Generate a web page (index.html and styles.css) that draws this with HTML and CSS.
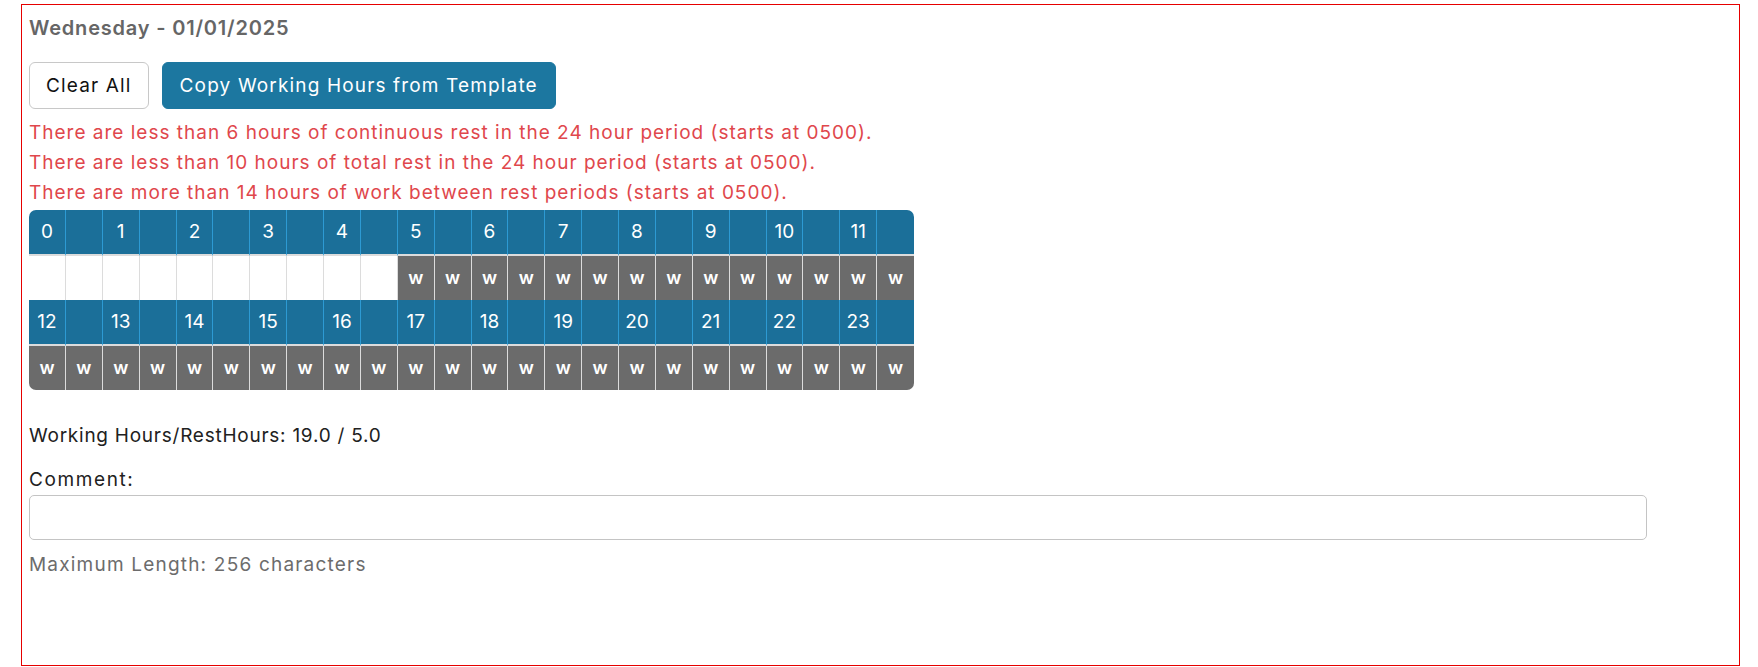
FILE: index.html
```html
<!DOCTYPE html>
<html lang="en">
<head>
  <meta charset="UTF-8">
  <meta name="viewport" content="width=device-width, initial-scale=1.0">
  <title>Work / Rest Hours</title>
  <link rel="stylesheet" href="styles.css">
</head>
<body>
  <div class="day-panel">
    <h3 class="day-title">Wednesday - 01/01/2025</h3>

    <div class="actions">
      <button class="btn btn-light">Clear All</button>
      <button class="btn btn-primary">Copy Working Hours from Template</button>
    </div>

    <div class="warnings">
      <div>There are less than 6 hours of continuous rest in the 24 hour period (starts at 0500).</div>
      <div>There are less than 10 hours of total rest in the 24 hour period (starts at 0500).</div>
      <div>There are more than 14 hours of work between rest periods (starts at 0500).</div>
    </div>

    <div class="hours">
      <!-- 00:00 - 11:30 -->
      <div class="hour">0</div><div class="hour"></div><div class="hour">1</div><div class="hour"></div>
      <div class="hour">2</div><div class="hour"></div><div class="hour">3</div><div class="hour"></div>
      <div class="hour">4</div><div class="hour"></div><div class="hour">5</div><div class="hour"></div>
      <div class="hour">6</div><div class="hour"></div><div class="hour">7</div><div class="hour"></div>
      <div class="hour">8</div><div class="hour"></div><div class="hour">9</div><div class="hour"></div>
      <div class="hour">10</div><div class="hour"></div><div class="hour">11</div><div class="hour"></div>

      <div class="slot"></div><div class="slot"></div><div class="slot"></div><div class="slot"></div>
      <div class="slot"></div><div class="slot"></div><div class="slot"></div><div class="slot"></div>
      <div class="slot"></div><div class="slot"></div><div class="slot work">w</div><div class="slot work">w</div>
      <div class="slot work">w</div><div class="slot work">w</div><div class="slot work">w</div><div class="slot work">w</div>
      <div class="slot work">w</div><div class="slot work">w</div><div class="slot work">w</div><div class="slot work">w</div>
      <div class="slot work">w</div><div class="slot work">w</div><div class="slot work">w</div><div class="slot work">w</div>

      <!-- 12:00 - 23:30 -->
      <div class="hour">12</div><div class="hour"></div><div class="hour">13</div><div class="hour"></div>
      <div class="hour">14</div><div class="hour"></div><div class="hour">15</div><div class="hour"></div>
      <div class="hour">16</div><div class="hour"></div><div class="hour">17</div><div class="hour"></div>
      <div class="hour">18</div><div class="hour"></div><div class="hour">19</div><div class="hour"></div>
      <div class="hour">20</div><div class="hour"></div><div class="hour">21</div><div class="hour"></div>
      <div class="hour">22</div><div class="hour"></div><div class="hour">23</div><div class="hour"></div>

      <div class="slot work">w</div><div class="slot work">w</div><div class="slot work">w</div><div class="slot work">w</div>
      <div class="slot work">w</div><div class="slot work">w</div><div class="slot work">w</div><div class="slot work">w</div>
      <div class="slot work">w</div><div class="slot work">w</div><div class="slot work">w</div><div class="slot work">w</div>
      <div class="slot work">w</div><div class="slot work">w</div><div class="slot work">w</div><div class="slot work">w</div>
      <div class="slot work">w</div><div class="slot work">w</div><div class="slot work">w</div><div class="slot work">w</div>
      <div class="slot work">w</div><div class="slot work">w</div><div class="slot work">w</div><div class="slot work">w</div>
    </div>

    <p class="totals">Working Hours/RestHours: 19.0 / 5.0</p>

    <label class="comment-label" for="comment">Comment:</label>
    <input class="comment-input" id="comment" type="text" maxlength="256">
    <div class="hint">Maximum Length: 256 characters</div>
  </div>
</body>
</html>
```

FILE: styles.css
```css
body {
  margin: 0;
  font-family: "Inter", "Open Sans", sans-serif;
  font-size: 19px;
  letter-spacing: 1px;
  color: #212121;
  background: #fff;
}

.day-panel {
  box-sizing: border-box;
  width: 1719px;
  height: 662px;
  margin: 4px 0 0 21px;
  padding: 11px 7px 10px;
  border: 1px solid #e60000;
}

.day-title {
  margin: 0;
  font-size: 20px;
  line-height: 24px;
  letter-spacing: 0.8px;
  font-weight: 600;
  color: #666;
}

.actions {
  display: flex;
  gap: 13px;
  margin-top: 22px;
}

.btn {
  height: 47px;
  padding: 0 17px;
  font-family: inherit;
  font-size: 19px;
  letter-spacing: 1.15px;
  border-radius: 6px;
  cursor: pointer;
}

.btn-light {
  padding: 0 16px;
  background: #fff;
  color: #111;
  border: 1px solid #c8c8c8;
}

.btn-primary {
  background: #1c77a0;
  color: #fff;
  border: 1px solid #1c77a0;
}

.warnings {
  margin-top: 9px;
  line-height: 30px;
  color: #e0474c;
}

.hours {
  display: grid;
  grid-template-columns: repeat(24, 1fr);
  width: 885px;
  margin-top: 2px;
  border-radius: 7px;
  overflow: hidden;
  letter-spacing: 0;
}

.hour {
  height: 44px;
  line-height: 44px;
  text-align: center;
  font-size: 19px;
  color: #fff;
  background: #1b6f99;
  border-right: 1px solid #2d9ad3;
  border-bottom: 2px solid #dcdcdc;
}

.slot {
  height: 44px;
  line-height: 44px;
  text-align: center;
  font-size: 18px;
  font-weight: 600;
  color: #fff;
  background: #fff;
  border-right: 1px solid #dcdcdc;
}

.slot.work {
  background: #6b6b6b;
}

.hour:nth-child(24n),
.slot:nth-child(24n) {
  border-right: none;
}

.totals {
  margin: 34px 0 0;
  line-height: 24px;
  letter-spacing: 0.75px;
}

.comment-label {
  display: block;
  margin-top: 20px;
  line-height: 24px;
  letter-spacing: 1.6px;
}

.comment-input {
  display: block;
  box-sizing: border-box;
  width: 1618px;
  height: 45px;
  margin-top: 3px;
  border: 1px solid #c4c4c4;
  border-radius: 5px;
}

.hint {
  margin-top: 13px;
  line-height: 24px;
  letter-spacing: 1.2px;
  color: #6c6c6c;
}
```
